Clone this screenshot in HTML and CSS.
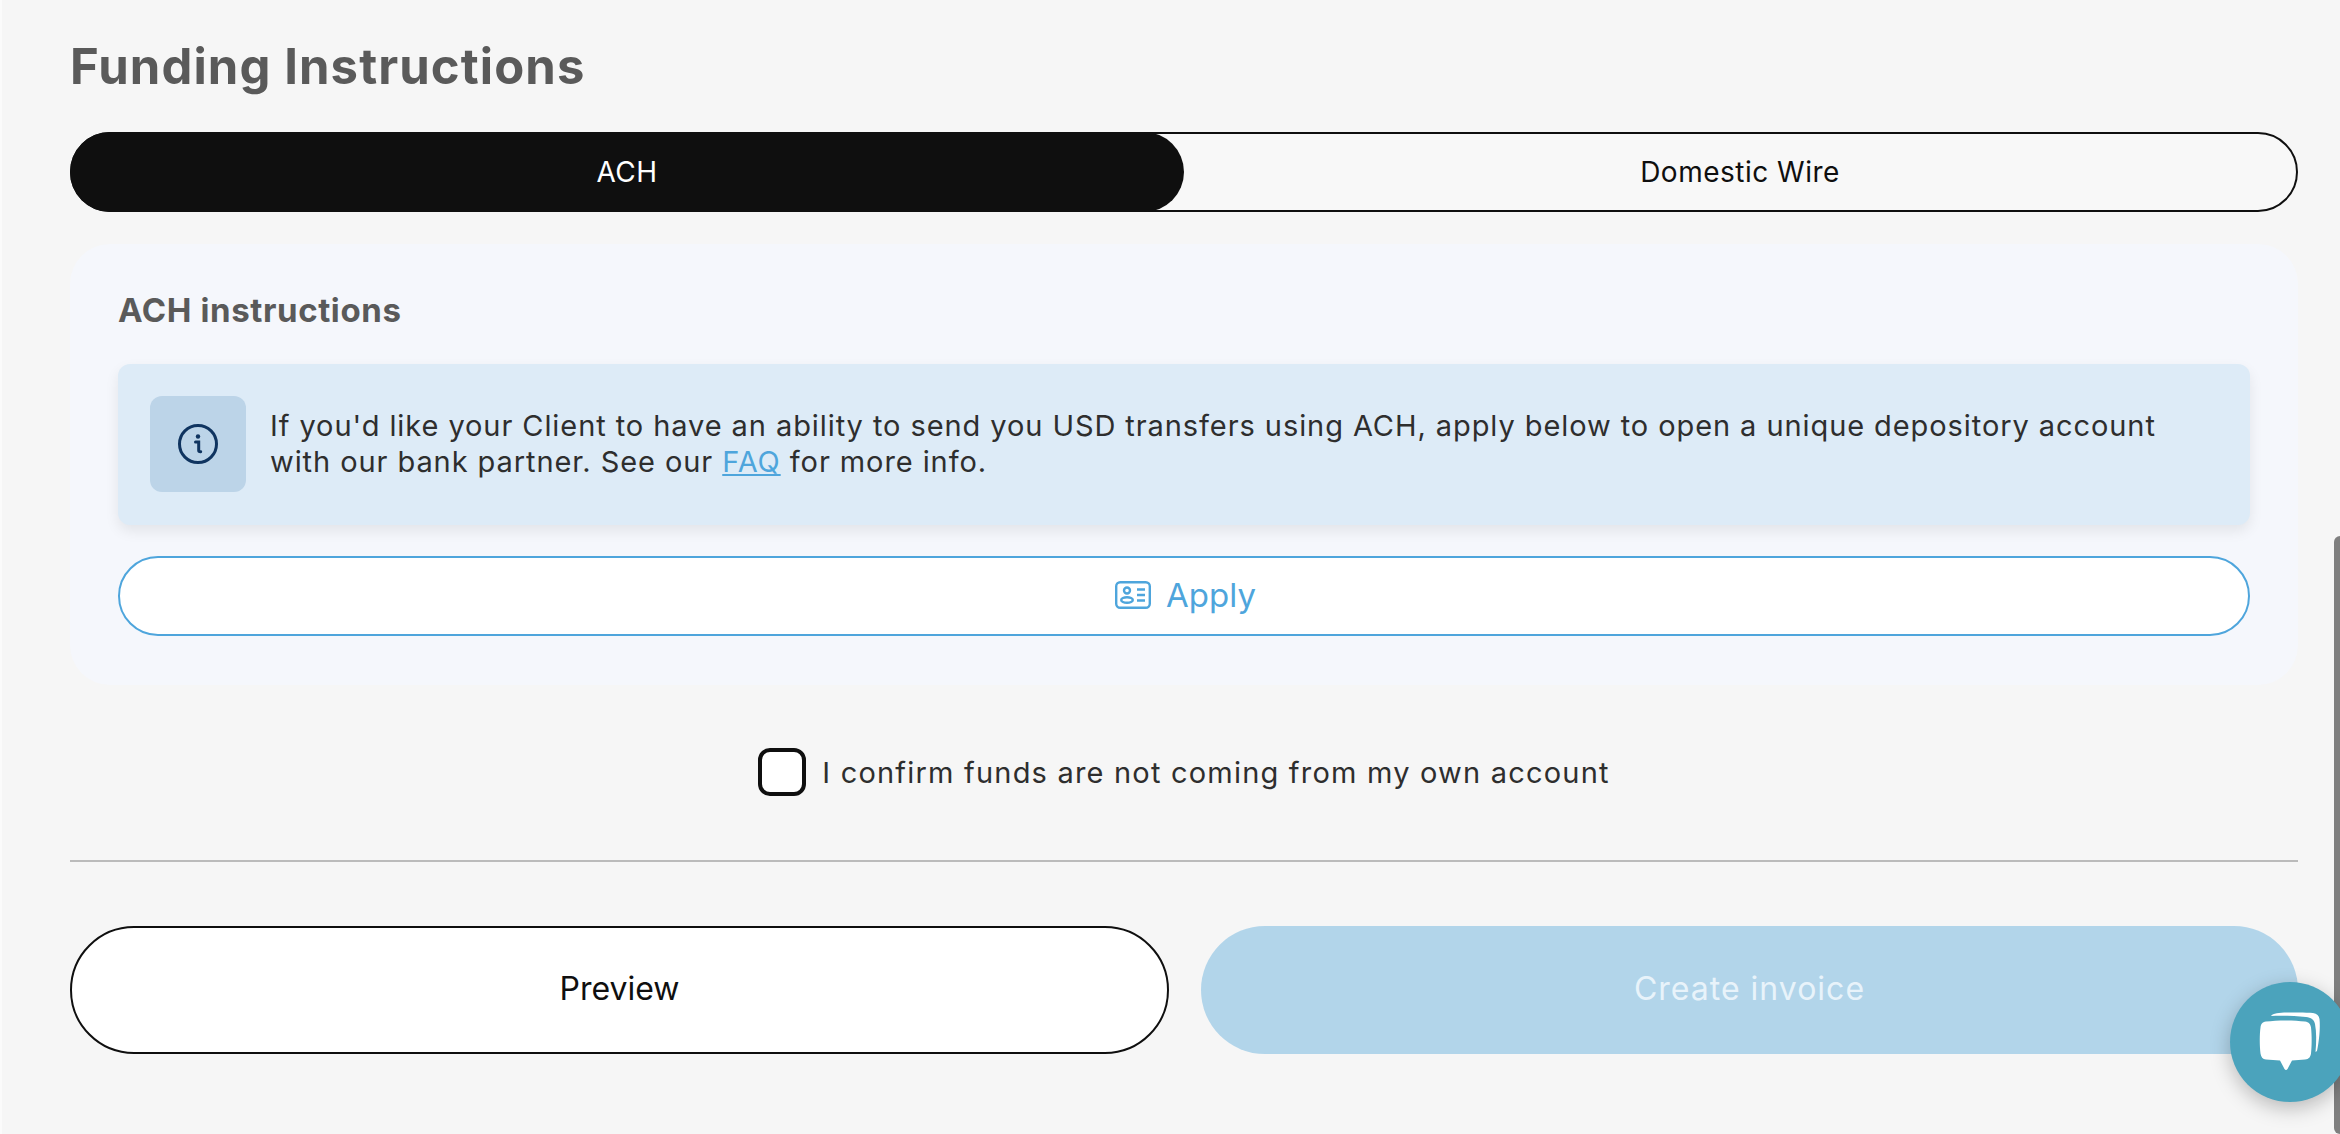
FILE: index.html
```html
<!DOCTYPE html>
<html lang="en">
<head>
  <meta charset="UTF-8">
  <meta name="viewport" content="width=device-width, initial-scale=1.0">
  <title>Funding Instructions</title>
  <link rel="stylesheet" href="styles.css">
</head>
<body>
  <main class="page">
    <h1 class="title">Funding Instructions</h1>

    <div class="tabs">
      <button class="tab tab-active">ACH</button>
      <button class="tab">Domestic Wire</button>
    </div>

    <section class="card">
      <h2 class="card-title">ACH instructions</h2>
      <div class="notice">
        <div class="notice-icon">
          <svg width="44" height="44" viewBox="0 0 44 44" fill="none">
            <circle cx="22" cy="22" r="18.5" stroke="#0f3460" stroke-width="3"/>
            <circle cx="22" cy="14.500" r="2.2" fill="#0f3460"/>
            <path d="M19.500 20h3.200v8.500c0 1 .6 1.300 2 1.200" stroke="#0f3460" stroke-width="3" stroke-linecap="round"/>
          </svg>
        </div>
        <p class="notice-text">If you'd like your Client to have an ability to send you USD transfers using ACH, apply below to open a unique depository account with our bank partner. See our <a href="#" class="link">FAQ</a> for more info.</p>
      </div>
      <button class="apply">
        <svg width="36" height="28" viewBox="0 0 36 28" fill="none" stroke="#4ea5dc" stroke-width="2.4">
          <rect x="1.2" y="1.2" width="33.6" height="25.6" rx="4"/>
          <circle cx="12" cy="9.500" r="3"/>
          <ellipse cx="12" cy="19" rx="5.800" ry="2.800"/>
          <path d="M22 8.500h8M22 14h8M22 19.500h8"/>
        </svg>
        Apply
      </button>
    </section>

    <label class="confirm">
      <span class="checkbox"></span>
      I confirm funds are not coming from my own account
    </label>

    <hr class="divider">

    <div class="actions">
      <button class="action action-preview">Preview</button>
      <button class="action action-create">Create invoice</button>
    </div>
  </main>

  <div class="scrollbar"></div>

  <div class="chat">
    <svg width="62" height="60" viewBox="0 0 62 60">
      <path d="M12 4C14 1.500 20 .8 28 .6 38 .3 48 .3 54 1c4 .5 6 2.500 6.500 6C61.500 16 60 30 58 39l-1.500 1C57.500 30 57.500 20 56 12 55 7.500 52 5.500 47 5 37 4 24 3.500 12 4z" fill="#fff"/>
      <path d="M7 9.500C18 8 36 8 46 9.500c4 .6 5.500 2.500 6 6 .9 7 .9 19 0 26-.5 3.500-2 5.600-6 6l-13 1-4.500 8.500c-.8 1.200-2.200 1.200-3 0L21 48.500l-14-1c-3.500-.4-5-2.500-5.500-6C.5 34 .5 22 1.500 15.500 2 12 3 10 7 9.500z" fill="#fff"/>
    </svg>
  </div>
</body>
</html>
```

FILE: styles.css
```css
* {
  box-sizing: border-box;
}
body {
  margin: 0;
  height: 1134px;
  overflow: hidden;
  background: #f6f6f6;
  border-left: 2px solid #fbfbfb;
  font-family: "Inter", "Noto Sans", sans-serif;
  color: #2e2e2e;
}
button {
  font-family: inherit;
}
.page {
  padding: 37px 42px 0 68px;
}
.title {
  margin: 0;
  height: 60px;
  line-height: 60px;
  font-size: 49px;
  font-weight: 700;
  letter-spacing: 1.1px;
  color: #5a5a5a;
}
.tabs {
  display: flex;
  margin-top: 35px;
  height: 80px;
  border: 2px solid #0f0f0f;
  border-radius: 40px;
  background: #f8f8f8;
}
.tab {
  flex: 1;
  border: none;
  background: none;
  font-size: 28px;
  letter-spacing: 0.5px;
  color: #0f0f0f;
  border-radius: 40px;
}
.tab-active {
  flex: none;
  width: 1114px;
  margin: -2px 0 -2px -2px;
  background: #0f0f0f;
  color: #fff;
}
.card {
  margin-top: 32px;
  height: 441px;
  padding: 46px 48px 0;
  background: #f5f7fc;
  border-radius: 40px;
}
.card-title {
  margin: 0;
  height: 40px;
  line-height: 40px;
  font-size: 33px;
  font-weight: 700;
  letter-spacing: 0.6px;
  color: #5a5a5a;
}
.notice {
  display: flex;
  align-items: center;
  gap: 24px;
  margin-top: 34px;
  height: 161px;
  padding: 0 60px 2px 32px;
  background: #ddebf7;
  border-radius: 12px;
  box-shadow: 0 6px 14px rgba(0, 0, 0, 0.08);
}
.notice-icon {
  flex: none;
  display: flex;
  align-items: center;
  justify-content: center;
  width: 96px;
  height: 96px;
  background: #bcd4e8;
  border-radius: 12px;
}
.notice-text {
  margin: 0;
  font-size: 29px;
  line-height: 36px;
  letter-spacing: 0.92px;
}
.link {
  color: #4ea5dc;
}
.apply {
  display: flex;
  align-items: center;
  justify-content: center;
  gap: 15px;
  width: 100%;
  height: 80px;
  margin-top: 31px;
  padding: 0 0 2px 3px;
  background: #fff;
  border: 2px solid #4ea5dc;
  border-radius: 40px;
  font-size: 33px;
  color: #4ea5dc;
}
.confirm {
  display: flex;
  align-items: center;
  justify-content: center;
  gap: 16px;
  margin-top: 63px;
  height: 48px;
  font-size: 29px;
  letter-spacing: 1.2px;
}
.checkbox {
  width: 48px;
  height: 48px;
  background: #fff;
  border: 4px solid #0f0f0f;
  border-radius: 12px;
}
.divider {
  margin: 64px 0 0;
  height: 2px;
  border: none;
  background: #bbb;
}
.actions {
  display: grid;
  grid-template-columns: 1099px 1fr;
  gap: 32px;
  margin-top: 64px;
}
.action {
  height: 128px;
  padding-bottom: 4px;
  border-radius: 64px;
  font-size: 32px;
}
.action-preview {
  background: #fff;
  border: 2px solid #0f0f0f;
  color: #0f0f0f;
}
.action-create {
  background: #b2d5ea;
  border: none;
  letter-spacing: 1px;
  color: #e8f3fa;
}
.scrollbar {
  position: fixed;
  top: 536px;
  right: 0;
  bottom: 0;
  width: 6px;
  background: #7f7f7f;
  border-radius: 6px 0 0 6px;
}
.chat {
  position: fixed;
  top: 982px;
  left: 2230px;
  width: 120px;
  height: 120px;
  display: flex;
  align-items: center;
  justify-content: center;
  background: #4ba3bc;
  border-radius: 50%;
  box-shadow: 0 6px 20px rgba(0, 0, 0, 0.25);
}
```
